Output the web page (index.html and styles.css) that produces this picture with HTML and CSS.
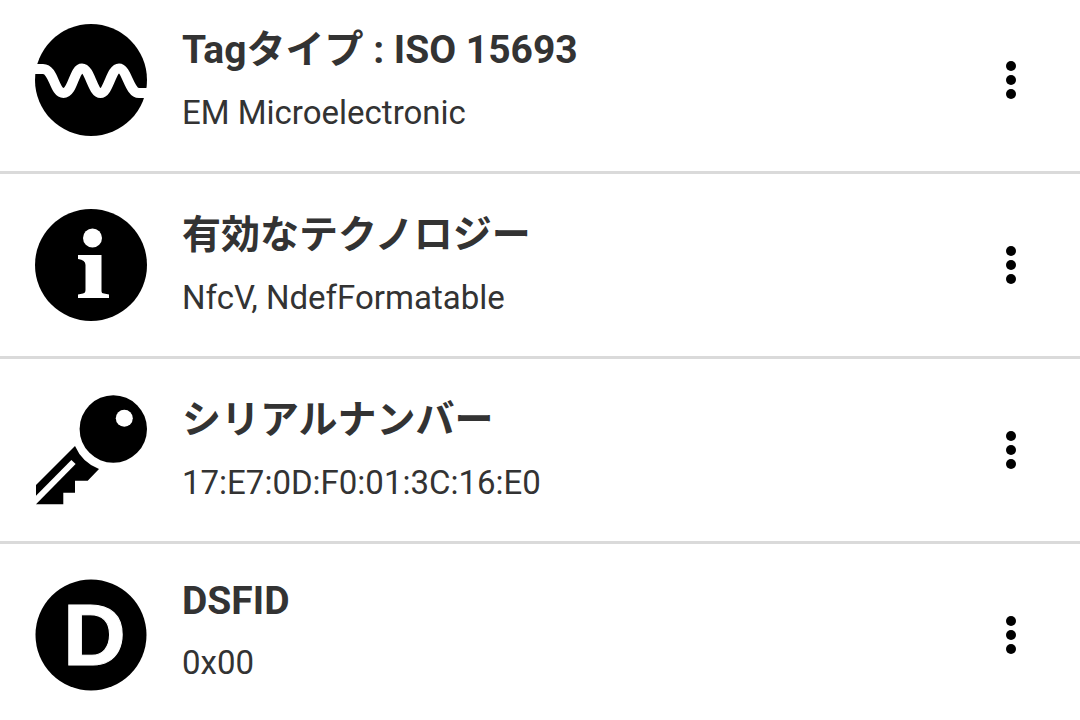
FILE: index.html
```html
<!DOCTYPE html>
<html lang="ja">

  <head>
    <meta charset="utf-8">
    <meta name="viewport" content="width=device-width, initial-scale=1">
    <title>Tag</title>
    <link rel="stylesheet" href="styles.css">
  </head>

  <body>
    <ul class="tag-list">
      <li class="tag-row">
        <svg class="tag-icon" viewBox="0 0 112 112" aria-hidden="true">
          <circle cx="56" cy="56" r="56" />
          <path class="wave" d="M-4 45H8C19 45 19 69 28.500 69S39 44.500 47 44.500S57.500 69 65.500 69S76 44.500 84 44.500S94 69 104 69H116" />
        </svg>
        <div class="tag-text">
          <h2>Tagタイプ : ISO 15693</h2>
          <p>EM Microelectronic</p>
        </div>
        <button class="more" type="button" aria-label="メニュー">
          <svg viewBox="0 0 10 38"><circle cx="5" cy="5" r="5" /><circle cx="5" cy="19" r="5" /><circle cx="5" cy="33" r="5" /></svg>
        </button>
      </li>

      <li class="tag-row">
        <svg class="tag-icon" viewBox="0 0 112 112" aria-hidden="true">
          <circle cx="56" cy="56" r="56" />
          <circle class="hole" cx="57.500" cy="29" r="9.500" />
          <path class="hole" d="M43 46H66.500V82Q66.500 84.500 69 84.500L74 85.500V89H43V85.500L48 84.500Q50.500 84 50.500 81V56Q50.500 51 43 50Z" />
        </svg>
        <div class="tag-text">
          <h2>有効なテクノロジー</h2>
          <p>NfcV, NdefFormatable</p>
        </div>
        <button class="more" type="button" aria-label="メニュー">
          <svg viewBox="0 0 10 38"><circle cx="5" cy="5" r="5" /><circle cx="5" cy="19" r="5" /><circle cx="5" cy="33" r="5" /></svg>
        </button>
      </li>

      <li class="tag-row">
        <svg class="tag-icon" viewBox="0 0 112 112" aria-hidden="true">
          <circle cx="78.300" cy="35" r="33.700" />
          <circle class="hole" cx="89.300" cy="24.300" r="8.500" />
          <path d="M40 52A43 43 0 0 0 64 75L52.700 86.700H40V98.700H28.300V110.300H1V91Z" />
          <path class="slot" d="M-4 111L38.500 68" />
        </svg>
        <div class="tag-text">
          <h2>シリアルナンバー</h2>
          <p>17:E7:0D:F0:01:3C:16:E0</p>
        </div>
        <button class="more" type="button" aria-label="メニュー">
          <svg viewBox="0 0 10 38"><circle cx="5" cy="5" r="5" /><circle cx="5" cy="19" r="5" /><circle cx="5" cy="33" r="5" /></svg>
        </button>
      </li>

      <li class="tag-row">
        <svg class="tag-icon" viewBox="0 0 112 112" aria-hidden="true">
          <circle cx="56" cy="56" r="55.500" />
          <text class="letter" x="28" y="86">D</text>
        </svg>
        <div class="tag-text">
          <h2>DSFID</h2>
          <p>0x00</p>
        </div>
        <button class="more" type="button" aria-label="メニュー">
          <svg viewBox="0 0 10 38"><circle cx="5" cy="5" r="5" /><circle cx="5" cy="19" r="5" /><circle cx="5" cy="33" r="5" /></svg>
        </button>
      </li>
    </ul>
  </body>

</html>
```
FILE: styles.css
```css
* {
  box-sizing: border-box;
}

body {
  margin: 0;
  background-color: #fff;
  color: #333;
  font-family: Roboto, "Noto Sans CJK JP", sans-serif;
  overflow: hidden;
}

/* the list is scrolled a little past its first row's top */
.tag-list {
  margin: -11px 0 0;
  padding: 0;
  list-style: none;
}

.tag-row {
  display: flex;
  align-items: center;
  gap: 35px;
  min-height: 185px;
  padding: 0 35px;
  border-bottom: 3px solid #dadada;
}

.tag-icon {
  flex: none;
  width: 112px;
  height: 112px;
  fill: #000;
}

.hole {
  fill: #fff;
}

.wave {
  fill: none;
  stroke: #fff;
  stroke-width: 10;
}

.slot {
  fill: none;
  stroke: #fff;
  stroke-width: 6;
}

.letter {
  fill: #fff;
  stroke: #fff;
  stroke-width: 1;
  font-family: "Liberation Sans", sans-serif;
  font-size: 87px;
  font-weight: bold;
}

.tag-text {
  flex: 1;
  padding-bottom: 10px;
}

h2 {
  margin: 0 0 19px;
  font-size: 39px;
  font-weight: bold;
}

p {
  margin: 0;
  font-size: 33px;
}

.more {
  display: flex;
  justify-content: center;
  align-items: center;
  width: 68px;
  height: 68px;
  padding: 0;
  border: none;
  background: none;
  cursor: pointer;
}

.more svg {
  width: 10px;
  height: 38px;
}
```
